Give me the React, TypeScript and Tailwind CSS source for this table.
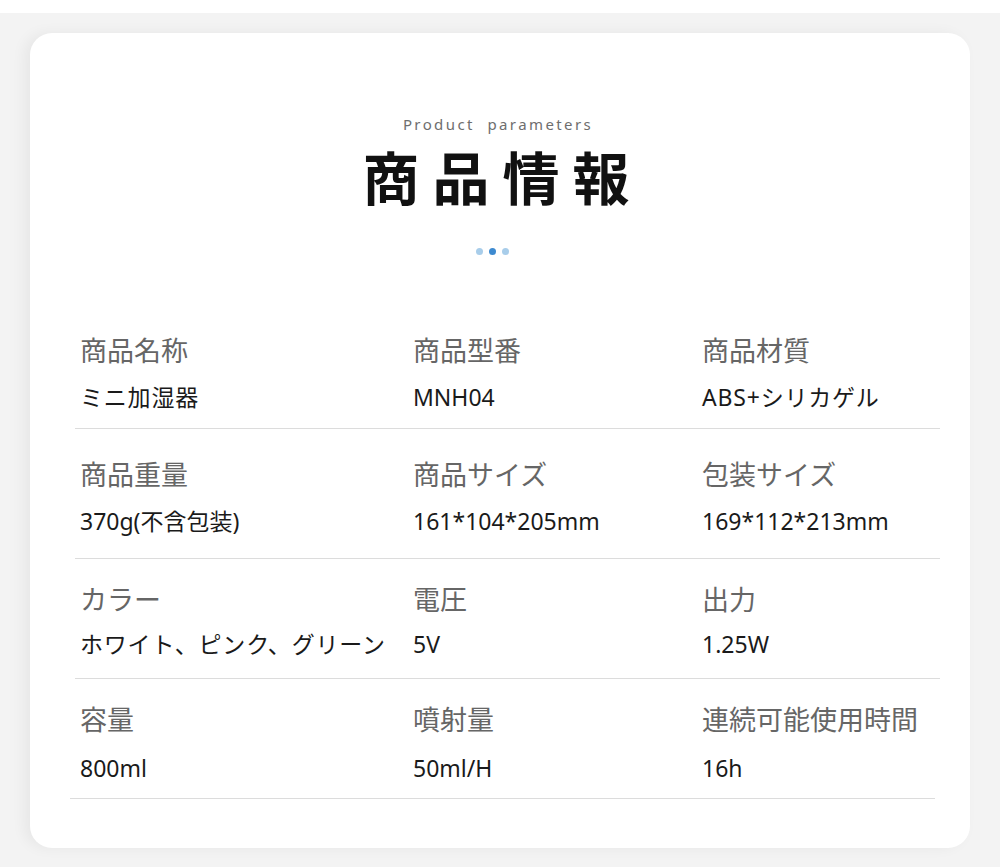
import React from 'react';

type Cell = { label: string; value: string; wide?: boolean };

const rows: { pad: string; gap: string; line: string; cells: Cell[] }[] = [
  {
    pad: 'pt-[16px] pb-[16px]',
    gap: 'mt-[16px]',
    line: 'ml-[45px] mr-[30px]',
    cells: [
      { label: '商品名称', value: 'ミニ加湿器', wide: true },
      { label: '商品型番', value: 'MNH04' },
      { label: '商品材質', value: 'ABS+シリカゲル', wide: true },
    ],
  },
  {
    pad: 'pt-[31px] pb-[22px]',
    gap: 'mt-[16px]',
    line: 'ml-[45px] mr-[30px]',
    cells: [
      { label: '商品重量', value: '370g(不含包装)' },
      { label: '商品サイズ', value: '161*104*205mm' },
      { label: '包装サイズ', value: '169*112*213mm' },
    ],
  },
  {
    pad: 'pt-[26px] pb-[19px]',
    gap: 'mt-[14px]',
    line: 'ml-[45px] mr-[30px]',
    cells: [
      { label: 'カラー', value: 'ホワイト、ピンク、グリーン', wide: true },
      { label: '電圧', value: '5V' },
      { label: '出力', value: '1.25W' },
    ],
  },
  {
    pad: 'pt-[26px] pb-[15px]',
    gap: 'mt-[18px]',
    line: 'ml-[40px] mr-[35px]',
    cells: [
      { label: '容量', value: '800ml' },
      { label: '噴射量', value: '50ml/H' },
      { label: '連続可能使用時間', value: '16h' },
    ],
  },
];

const App: React.FC = () => {
  return (
    <div
      className="w-[1000px] h-[867px] bg-white overflow-hidden"
      style={{ fontFamily: '"Noto Sans", "Noto Sans CJK JP", sans-serif' }}
    >
      <div className="mt-[13px] h-[854px] bg-[#f3f3f3] px-[30px] pt-[20px]">
        {/* Card */}
        <div className="h-[815px] rounded-[22px] bg-white shadow-[-6px_0_14px_rgba(0,0,0,0.05)] pt-[81px]">
          {/* Header */}
          <div className="flex flex-col items-center">
            <p className="text-[15px] leading-[20px] tracking-[2.4px] mr-[4px] text-[#6e6e6e]">Product&nbsp; parameters</p>
            <h2 className="mt-[13px] text-[57px] leading-[62px] font-bold tracking-[13px] pl-[5px] text-[#111]">
              商品情報
            </h2>
            <div className="mt-[39px] mr-[16px] flex items-center gap-[6px]">
              <span className="w-[7px] h-[7px] rounded-full bg-[#a8cdea]" />
              <span className="w-[7px] h-[7px] rounded-full bg-[#3d8ad0]" />
              <span className="w-[7px] h-[7px] rounded-full bg-[#a8cdea]" />
            </div>
          </div>

          {/* Parameter table */}
          <div className="mt-[65px]">
            {rows.map((row, i) => (
              <div key={i}>
                <div className={`grid grid-cols-[333px_289px_1fr] pl-[50px] ${row.pad}`}>
                  {row.cells.map((c) => (
                    <div key={c.label} className="whitespace-nowrap">
                      <p className="text-[27px] leading-[30px] text-[#666]">{c.label}</p>
                      <p
                        className={`${row.gap} text-[23px] leading-[30px] text-[#1a1a1a] ${
                          c.wide ? 'tracking-[0.8px]' : ''
                        }`}
                      >
                        {c.value}
                      </p>
                    </div>
                  ))}
                </div>
                <div className={`h-px bg-[#dcdcdc] ${row.line}`} />
              </div>
            ))}
          </div>
        </div>
      </div>
    </div>
  );
};

export default App;
